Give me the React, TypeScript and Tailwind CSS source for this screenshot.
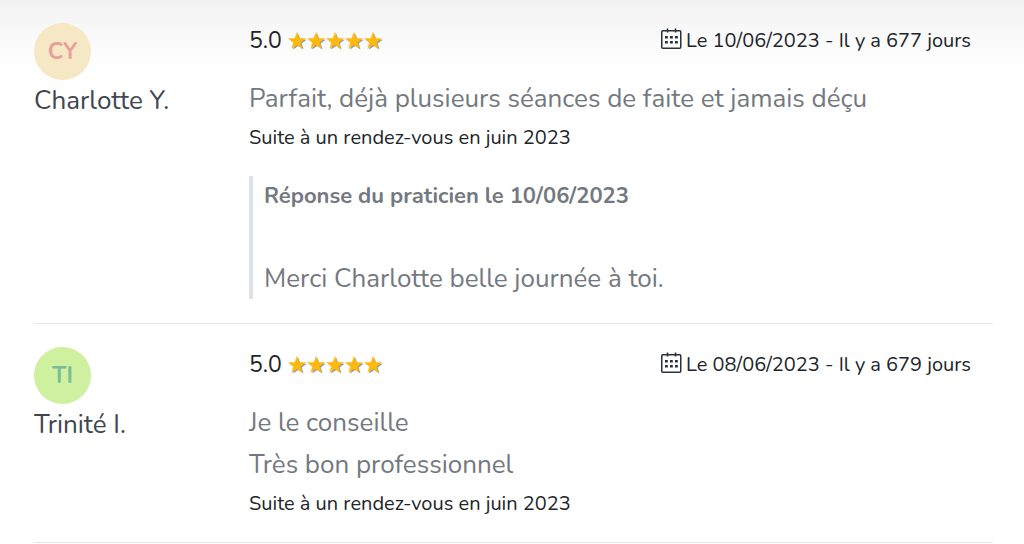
type Review = {
  initials: string;
  avatarClass: string;
  name: string;
  date: string;
  daysAgo: number;
  comment: string[];
  appointment: string;
  reply?: { date: string; text: string };
};

const reviews: Review[] = [
  {
    initials: 'CY',
    avatarClass: 'bg-[#f6e8c5] text-[#e8a09c]',
    name: 'Charlotte Y.',
    date: '10/06/2023',
    daysAgo: 677,
    comment: ['Parfait, déjà plusieurs séances de faite et jamais déçu'],
    appointment: 'juin 2023',
    reply: { date: '10/06/2023', text: 'Merci Charlotte belle journée à toi.' },
  },
  {
    initials: 'TI',
    avatarClass: 'bg-[#cff09e] text-[#79bd9a]',
    name: 'Trinité I.',
    date: '08/06/2023',
    daysAgo: 679,
    comment: ['Je le conseille', 'Très bon professionnel'],
    appointment: 'juin 2023',
  },
];

function Star() {
  const points = '9,0.5 11.1,6.4 17.4,6.6 12.4,10.4 14.2,16.4 9,12.8 3.8,16.4 5.6,10.4 0.6,6.6 6.9,6.4';
  return (
    <svg viewBox="0 0 19 18" className="h-[18px] w-[19px]" aria-hidden="true">
      <polygon points={points} fill="#969ba8" transform="translate(1.3 1.2)" />
      <polygon points={points} fill="#ffb80c" stroke="#ffb80c" strokeWidth="0.5" />
    </svg>
  );
}

function CalendarIcon() {
  return (
    <svg viewBox="0 0 21 22" className="mb-1 h-[22px] w-[21px]" fill="none" stroke="#2b303a" aria-hidden="true">
      <rect x="0.75" y="2.75" width="19" height="17.5" rx="1" strokeWidth="1.5" />
      <path d="M6.5 0.5v4M14.5 0.5v4" strokeWidth="1.6" />
      <path
        d="M4 9.25h2.8M9 9.25h2.8M14 9.25h2.8M4 14.25h2.8M9 14.25h2.8M14 14.25h2.8"
        strokeWidth="2.6"
      />
    </svg>
  );
}

function ReviewItem({ review }: { review: Review }) {
  return (
    <article className="flex border-b border-[#e4e6e8] pt-[23px] pb-5">
      <div className="w-[215px] shrink-0">
        <div
          className={`flex size-[57px] items-center justify-center rounded-full pt-0.5 text-[23px] font-bold ${review.avatarClass}`}
        >
          {review.initials}
        </div>
        <h2 className="text-[26px] leading-[41px] text-[#40454f]">{review.name}</h2>
      </div>
      <div className="min-w-0 flex-1">
        <div className="flex h-[36px] items-center justify-between pr-[22px]">
          <div className="flex items-center gap-1.5">
            <span className="text-[23px]">5.0</span>
            <div className="flex" role="img" aria-label="5 étoiles sur 5">
              {[1, 2, 3, 4, 5].map((n) => (
                <Star key={n} />
              ))}
            </div>
          </div>
          <div className="flex items-center gap-1 text-[20px]">
            <CalendarIcon />
            <span>
              Le {review.date} - Il y a {review.daysAgo} jours
            </span>
          </div>
        </div>
        <div className="mt-[19px] text-[26px] leading-[42px] text-[#737980]">
          {review.comment.map((line) => (
            <p key={line}>{line}</p>
          ))}
        </div>
        <p className="text-[20px] leading-[36px]">Suite à un rendez-vous en {review.appointment}</p>
        {review.reply && (
          <blockquote className="mt-5 mb-1 border-l-4 border-[#dee2e6] pl-[11px] leading-[41px] text-[#737980]">
            <p className="text-[22px] font-bold">Réponse du praticien le {review.reply.date}</p>
            <p className="pt-[41px] text-[26px]">{review.reply.text}</p>
          </blockquote>
        )}
      </div>
    </article>
  );
}

export default function App() {
  return (
    <main className="bg-white bg-[linear-gradient(to_bottom,#f1f1f1,#f8f8f8_28px,#fdfdfd_60px,#ffffff_84px)] pr-[31px] pl-[34px] font-['Nunito','Lato',sans-serif] text-[#212529]">
      {reviews.map((review) => (
        <ReviewItem key={review.name} review={review} />
      ))}
    </main>
  );
}
